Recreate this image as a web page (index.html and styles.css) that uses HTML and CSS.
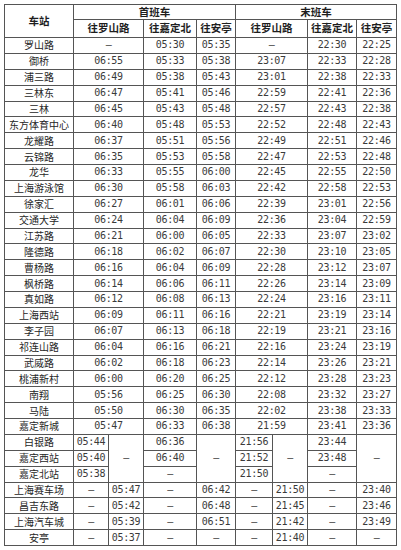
FILE: index.html
```html
<!DOCTYPE html>
<html lang="zh-CN">
<head>
<meta charset="utf-8">
<link rel="stylesheet" href="styles.css">
</head>
<body>
<table class="tt">
<colgroup>
<col class="c-st"><col class="c-a1"><col class="c-a2"><col class="c-b"><col class="c-c"><col class="c-d1"><col class="c-d2"><col class="c-e"><col class="c-f">
</colgroup>
<thead>
<tr class="h1"><th rowspan="2" class="hs">车站</th><th colspan="4">首班车</th><th colspan="4">末班车</th></tr>
<tr class="h2"><th colspan="2">往罗山路</th><th>往嘉定北</th><th>往安亭</th><th colspan="2">往罗山路</th><th>往嘉定北</th><th>往安亭</th></tr>
</thead>
<tbody>
<tr><td class="st">罗山路</td><td colspan="2" class="t">—</td><td class="t">05:30</td><td class="t">05:35</td><td colspan="2" class="t">—</td><td class="t">22:30</td><td class="t">22:25</td></tr>
<tr><td class="st">御桥</td><td colspan="2" class="t">06:55</td><td class="t">05:33</td><td class="t">05:38</td><td colspan="2" class="t">23:07</td><td class="t">22:33</td><td class="t">22:28</td></tr>
<tr><td class="st">浦三路</td><td colspan="2" class="t">06:49</td><td class="t">05:38</td><td class="t">05:43</td><td colspan="2" class="t">23:01</td><td class="t">22:38</td><td class="t">22:33</td></tr>
<tr><td class="st">三林东</td><td colspan="2" class="t">06:47</td><td class="t">05:41</td><td class="t">05:46</td><td colspan="2" class="t">22:59</td><td class="t">22:41</td><td class="t">22:36</td></tr>
<tr><td class="st">三林</td><td colspan="2" class="t">06:45</td><td class="t">05:43</td><td class="t">05:48</td><td colspan="2" class="t">22:57</td><td class="t">22:43</td><td class="t">22:38</td></tr>
<tr><td class="st">东方体育中心</td><td colspan="2" class="t">06:40</td><td class="t">05:48</td><td class="t">05:53</td><td colspan="2" class="t">22:52</td><td class="t">22:48</td><td class="t">22:43</td></tr>
<tr><td class="st">龙耀路</td><td colspan="2" class="t">06:37</td><td class="t">05:51</td><td class="t">05:56</td><td colspan="2" class="t">22:49</td><td class="t">22:51</td><td class="t">22:46</td></tr>
<tr><td class="st">云锦路</td><td colspan="2" class="t">06:35</td><td class="t">05:53</td><td class="t">05:58</td><td colspan="2" class="t">22:47</td><td class="t">22:53</td><td class="t">22:48</td></tr>
<tr><td class="st">龙华</td><td colspan="2" class="t">06:33</td><td class="t">05:55</td><td class="t">06:00</td><td colspan="2" class="t">22:45</td><td class="t">22:55</td><td class="t">22:50</td></tr>
<tr><td class="st">上海游泳馆</td><td colspan="2" class="t">06:30</td><td class="t">05:58</td><td class="t">06:03</td><td colspan="2" class="t">22:42</td><td class="t">22:58</td><td class="t">22:53</td></tr>
<tr><td class="st">徐家汇</td><td colspan="2" class="t">06:27</td><td class="t">06:01</td><td class="t">06:06</td><td colspan="2" class="t">22:39</td><td class="t">23:01</td><td class="t">22:56</td></tr>
<tr><td class="st">交通大学</td><td colspan="2" class="t">06:24</td><td class="t">06:04</td><td class="t">06:09</td><td colspan="2" class="t">22:36</td><td class="t">23:04</td><td class="t">22:59</td></tr>
<tr><td class="st">江苏路</td><td colspan="2" class="t">06:21</td><td class="t">06:00</td><td class="t">06:05</td><td colspan="2" class="t">22:33</td><td class="t">23:07</td><td class="t">23:02</td></tr>
<tr><td class="st">隆德路</td><td colspan="2" class="t">06:18</td><td class="t">06:02</td><td class="t">06:07</td><td colspan="2" class="t">22:30</td><td class="t">23:10</td><td class="t">23:05</td></tr>
<tr><td class="st">曹杨路</td><td colspan="2" class="t">06:16</td><td class="t">06:04</td><td class="t">06:09</td><td colspan="2" class="t">22:28</td><td class="t">23:12</td><td class="t">23:07</td></tr>
<tr><td class="st">枫桥路</td><td colspan="2" class="t">06:14</td><td class="t">06:06</td><td class="t">06:11</td><td colspan="2" class="t">22:26</td><td class="t">23:14</td><td class="t">23:09</td></tr>
<tr><td class="st">真如路</td><td colspan="2" class="t">06:12</td><td class="t">06:08</td><td class="t">06:13</td><td colspan="2" class="t">22:24</td><td class="t">23:16</td><td class="t">23:11</td></tr>
<tr><td class="st">上海西站</td><td colspan="2" class="t">06:09</td><td class="t">06:11</td><td class="t">06:16</td><td colspan="2" class="t">22:21</td><td class="t">23:19</td><td class="t">23:14</td></tr>
<tr><td class="st">李子园</td><td colspan="2" class="t">06:07</td><td class="t">06:13</td><td class="t">06:18</td><td colspan="2" class="t">22:19</td><td class="t">23:21</td><td class="t">23:16</td></tr>
<tr><td class="st">祁连山路</td><td colspan="2" class="t">06:04</td><td class="t">06:16</td><td class="t">06:21</td><td colspan="2" class="t">22:16</td><td class="t">23:24</td><td class="t">23:19</td></tr>
<tr><td class="st">武威路</td><td colspan="2" class="t">06:02</td><td class="t">06:18</td><td class="t">06:23</td><td colspan="2" class="t">22:14</td><td class="t">23:26</td><td class="t">23:21</td></tr>
<tr><td class="st">桃浦新村</td><td colspan="2" class="t">06:00</td><td class="t">06:20</td><td class="t">06:25</td><td colspan="2" class="t">22:12</td><td class="t">23:28</td><td class="t">23:23</td></tr>
<tr><td class="st">南翔</td><td colspan="2" class="t">05:56</td><td class="t">06:25</td><td class="t">06:30</td><td colspan="2" class="t">22:08</td><td class="t">23:32</td><td class="t">23:27</td></tr>
<tr><td class="st">马陆</td><td colspan="2" class="t">05:50</td><td class="t">06:30</td><td class="t">06:35</td><td colspan="2" class="t">22:02</td><td class="t">23:38</td><td class="t">23:33</td></tr>
<tr><td class="st">嘉定新城</td><td colspan="2" class="t">05:47</td><td class="t">06:33</td><td class="t">06:38</td><td colspan="2" class="t">21:59</td><td class="t">23:41</td><td class="t">23:36</td></tr>
<tr><td class="st">白银路</td><td class="t">05:44</td><td rowspan="3" class="t">—</td><td class="t">06:36</td><td rowspan="3" class="t">—</td><td class="t">21:56</td><td rowspan="3" class="t">—</td><td class="t">23:44</td><td rowspan="3" class="t">—</td></tr>
<tr><td class="st">嘉定西站</td><td class="t">05:40</td><td class="t">06:40</td><td class="t">21:52</td><td class="t">23:48</td></tr>
<tr><td class="st">嘉定北站</td><td class="t">05:38</td><td class="t">—</td><td class="t">21:50</td><td class="t">—</td></tr>
<tr><td class="st">上海赛车场</td><td class="t">—</td><td class="t">05:47</td><td class="t">—</td><td class="t">06:42</td><td class="t">—</td><td class="t">21:50</td><td class="t">—</td><td class="t">23:40</td></tr>
<tr><td class="st">昌吉东路</td><td class="t">—</td><td class="t">05:42</td><td class="t">—</td><td class="t">06:48</td><td class="t">—</td><td class="t">21:45</td><td class="t">—</td><td class="t">23:46</td></tr>
<tr><td class="st">上海汽车城</td><td class="t">—</td><td class="t">05:39</td><td class="t">—</td><td class="t">06:51</td><td class="t">—</td><td class="t">21:42</td><td class="t">—</td><td class="t">23:49</td></tr>
<tr><td class="st">安亭</td><td class="t">—</td><td class="t">05:37</td><td class="t">—</td><td class="t">—</td><td class="t">—</td><td class="t">21:40</td><td class="t">—</td><td class="t">—</td></tr>
</tbody>
</table>
</body>
</html>
```
FILE: styles.css
```css
html, body {
  margin: 0;
  background: #ffffff;
}
body {
  padding: 4px 0 0 4px;
  font-family: "Noto Sans CJK SC", sans-serif;
  color: #222222;
}
.tt {
  border-collapse: collapse;
  table-layout: fixed;
  width: 392px;
}
.c-st { width: 69px; }
.c-a1 { width: 35px; }
.c-a2 { width: 35px; }
.c-b { width: 53px; }
.c-c { width: 39px; }
.c-d1 { width: 37px; }
.c-d2 { width: 35px; }
.c-e { width: 49px; }
.c-f { width: 40px; }
.tt th, .tt td {
  border: 1px solid #555555;
  padding: 0;
  text-align: center;
  vertical-align: middle;
  white-space: nowrap;
  overflow: hidden;
  line-height: 1;
}
.tt th {
  font-size: 10.5px;
  font-weight: 700;
  color: #1e1e1e;
}
.h1 { height: 15px; }
.h2 { height: 18px; }
.tt tbody tr { height: 15.875px; }
.st {
  font-size: 10px;
  color: #262626;
}
.t {
  font-family: "DejaVu Sans Mono", monospace;
  font-size: 10px;
  letter-spacing: -0.3px;
  color: #3a3a3a;
}
```
